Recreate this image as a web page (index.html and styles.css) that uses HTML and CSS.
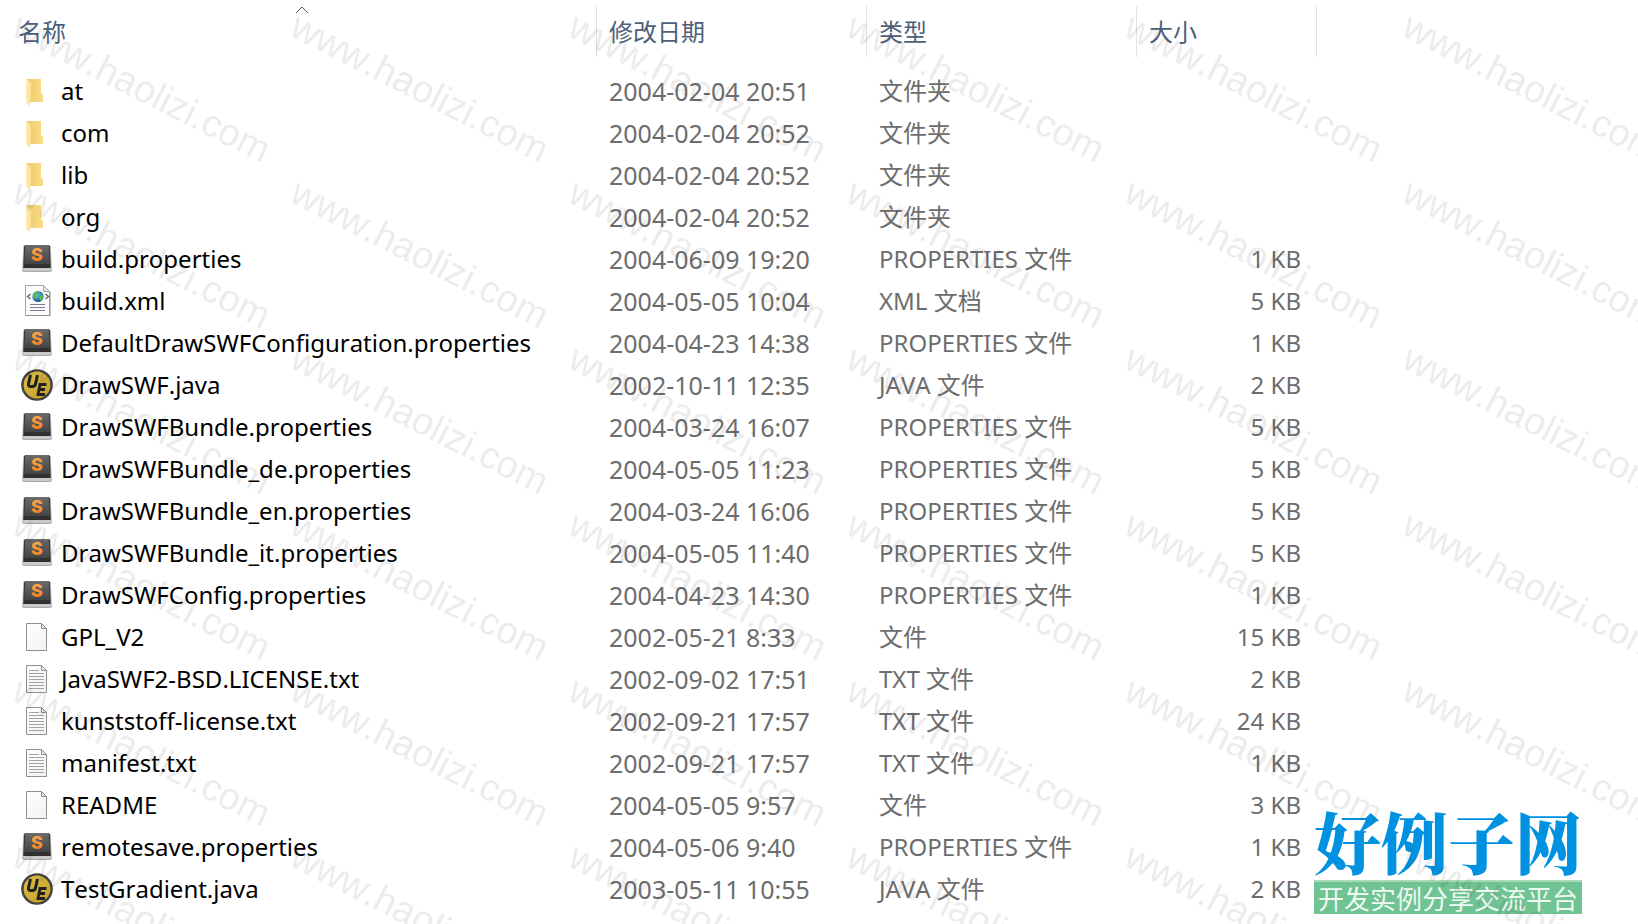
FILE: index.html
```html
<!DOCTYPE html>
<html lang="zh-CN">
<head>
<meta charset="utf-8">
<title>文件列表</title>
<link rel="stylesheet" href="styles.css">
</head>
<body>
<svg class="sprite" aria-hidden="true">
  <defs>
    <linearGradient id="folder-back" x1="0" x2="1"><stop offset="0" stop-color="#edc96d"/><stop offset="1" stop-color="#fbdc85"/></linearGradient>
    <linearGradient id="folder-front" x1="0" x2="1"><stop offset="0" stop-color="#ffeeb5"/><stop offset="1" stop-color="#fbdf92"/></linearGradient>
    <linearGradient id="key-face" x1="0" y1="0" x2="0" y2="1"><stop offset="0" stop-color="#6c6c6c"/><stop offset="1" stop-color="#444444"/></linearGradient>
    <linearGradient id="key-letter" x1="0" y1="0" x2="0" y2="1"><stop offset="0" stop-color="#ffb152"/><stop offset="1" stop-color="#f47a1c"/></linearGradient>
    <linearGradient id="gold" x1="0" y1="0" x2="1" y2="1"><stop offset="0" stop-color="#dcc04c"/><stop offset="1" stop-color="#c39b22"/></linearGradient>
    <linearGradient id="paper" x1="0" y1="0" x2="1" y2="1"><stop offset="0" stop-color="#ffffff"/><stop offset="1" stop-color="#f1f2f3"/></linearGradient>
    <radialGradient id="globe" cx=".4" cy=".35" r=".7"><stop offset="0" stop-color="#6cc4f2"/><stop offset="1" stop-color="#1a3fa8"/></radialGradient>
  </defs>
  <symbol id="folder" viewBox="0 0 32 32">
    <path d="M5 4h15v14l2 2v7H9z" fill="url(#folder-back)"/>
    <path d="M5 4l5 4v18h-1v5l-4-3z" fill="url(#folder-front)"/>
  </symbol>
  <symbol id="sublime" viewBox="0 0 32 32">
    <path d="M4 2h24q1.500 0 1.700 1.500L31 26q0 3-2 3H3q-2 0-2-3L2.300 3.500Q2.500 2 4 2z" fill="#c9c9cb"/>
    <path d="M1.500 26.500q.5 2 2 2h25q1.500 0 2-2" fill="none" stroke="#a9a9ad"/>
    <path d="M4.500 2h23l1.500 1.500.8 21.500H2.200L3 3.500z" fill="#303030"/>
    <path d="M5 2h22l1 1.500.7 17.500H3.300L4 3.500z" fill="url(#key-face)"/>
    <text x="16" y="18" text-anchor="middle" class="key-letter">S</text>
  </symbol>
  <symbol id="xml" viewBox="0 0 32 32">
    <path d="M4.500.5h18l6 6v24h-24z" fill="#fcfcfd" stroke="#a5a5a8"/>
    <path d="M5 30.500h24V7" fill="none" stroke="#8e8e92"/>
    <path d="M22.500.5v6h6z" fill="#e6e6ea" stroke="#a5a5a8"/>
    <circle cx="17" cy="11.500" r="5.600" fill="url(#globe)"/>
    <path d="M12 10q2-4 5-3.500l1 2-3 2 1 2-2 2q-2-2-2-4.500zM18 12l3-3 1.500 2-1 3-2 2.500z" fill="#4fc044"/>
    <path d="M9.500 9L6.500 11.500l3 2.500M24.500 9l3 2.500-3 2.500" fill="none" stroke="#5a5a66" stroke-width="1.200"/>
    <path d="M9 19.500h15M9 22.500h15M9 25.500h15" stroke="#8579a0"/>
  </symbol>
  <symbol id="ultraedit" viewBox="0 0 32 32">
    <circle cx="16" cy="16" r="14.600" fill="url(#gold)" stroke="#424242" stroke-width="2.400"/>
    <path d="M9.500 6L7.500 15q-.3 2.500 2 2.500h2q2.500 0 3-2.500l2-9" fill="none" stroke="#20201c" stroke-width="3"/>
    <path d="M25.500 15.500h-6.500l-2 10h7M18 20.500h6" fill="none" stroke="#20201c" stroke-width="2.800"/>
  </symbol>
  <symbol id="blank" viewBox="0 0 32 32">
    <path d="M5.500 2.500h15l5 5v22h-20z" fill="url(#paper)" stroke="#8f8f8f"/>
    <path d="M20.500 2.500v5h5z" fill="#e8e8e8" stroke="#8f8f8f"/>
  </symbol>
  <symbol id="text" viewBox="0 0 32 32">
    <use href="#blank"/>
    <path d="M8 7.500h10M8 10.500h15M8 13.500h15M8 16.500h15M8 19.500h15M8 22.500h15M8 25.500h15" stroke="#a2a2a2"/>
  </symbol>
</svg>

<main class="explorer">
  <table class="files">
    <colgroup><col class="col-name"><col class="col-date"><col class="col-type"><col class="col-size"><col></colgroup>
    <thead>
      <tr>
        <th aria-sort="ascending"><button type="button">名称</button><svg class="sort" viewBox="0 0 14 8" aria-hidden="true"><path d="M1 7l6-6 6 6"/></svg></th>
        <th><button type="button">修改日期</button></th>
        <th><button type="button">类型</button></th>
        <th><button type="button">大小</button></th>
        <td></td>
      </tr>
    </thead>
    <tbody>
      <tr><td><span class="name"><svg><use href="#folder"/></svg>at</span></td><td>2004-02-04 20:51</td><td>文件夹</td><td></td></tr>
      <tr><td><span class="name"><svg><use href="#folder"/></svg>com</span></td><td>2004-02-04 20:52</td><td>文件夹</td><td></td></tr>
      <tr><td><span class="name"><svg><use href="#folder"/></svg>lib</span></td><td>2004-02-04 20:52</td><td>文件夹</td><td></td></tr>
      <tr><td><span class="name"><svg><use href="#folder"/></svg>org</span></td><td>2004-02-04 20:52</td><td>文件夹</td><td></td></tr>
      <tr><td><span class="name"><svg><use href="#sublime"/></svg>build.properties</span></td><td>2004-06-09 19:20</td><td>PROPERTIES 文件</td><td>1 KB</td></tr>
      <tr><td><span class="name"><svg><use href="#xml"/></svg>build.xml</span></td><td>2004-05-05 10:04</td><td>XML 文档</td><td>5 KB</td></tr>
      <tr><td><span class="name"><svg><use href="#sublime"/></svg>DefaultDrawSWFConfiguration.properties</span></td><td>2004-04-23 14:38</td><td>PROPERTIES 文件</td><td>1 KB</td></tr>
      <tr><td><span class="name"><svg><use href="#ultraedit"/></svg>DrawSWF.java</span></td><td>2002-10-11 12:35</td><td>JAVA 文件</td><td>2 KB</td></tr>
      <tr><td><span class="name"><svg><use href="#sublime"/></svg>DrawSWFBundle.properties</span></td><td>2004-03-24 16:07</td><td>PROPERTIES 文件</td><td>5 KB</td></tr>
      <tr><td><span class="name"><svg><use href="#sublime"/></svg>DrawSWFBundle_de.properties</span></td><td>2004-05-05 11:23</td><td>PROPERTIES 文件</td><td>5 KB</td></tr>
      <tr><td><span class="name"><svg><use href="#sublime"/></svg>DrawSWFBundle_en.properties</span></td><td>2004-03-24 16:06</td><td>PROPERTIES 文件</td><td>5 KB</td></tr>
      <tr><td><span class="name"><svg><use href="#sublime"/></svg>DrawSWFBundle_it.properties</span></td><td>2004-05-05 11:40</td><td>PROPERTIES 文件</td><td>5 KB</td></tr>
      <tr><td><span class="name"><svg><use href="#sublime"/></svg>DrawSWFConfig.properties</span></td><td>2004-04-23 14:30</td><td>PROPERTIES 文件</td><td>1 KB</td></tr>
      <tr><td><span class="name"><svg><use href="#blank"/></svg>GPL_V2</span></td><td>2002-05-21 8:33</td><td>文件</td><td>15 KB</td></tr>
      <tr><td><span class="name"><svg><use href="#text"/></svg>JavaSWF2-BSD.LICENSE.txt</span></td><td>2002-09-02 17:51</td><td>TXT 文件</td><td>2 KB</td></tr>
      <tr><td><span class="name"><svg><use href="#text"/></svg>kunststoff-license.txt</span></td><td>2002-09-21 17:57</td><td>TXT 文件</td><td>24 KB</td></tr>
      <tr><td><span class="name"><svg><use href="#text"/></svg>manifest.txt</span></td><td>2002-09-21 17:57</td><td>TXT 文件</td><td>1 KB</td></tr>
      <tr><td><span class="name"><svg><use href="#blank"/></svg>README</span></td><td>2004-05-05 9:57</td><td>文件</td><td>3 KB</td></tr>
      <tr><td><span class="name"><svg><use href="#sublime"/></svg>remotesave.properties</span></td><td>2004-05-06 9:40</td><td>PROPERTIES 文件</td><td>1 KB</td></tr>
      <tr><td><span class="name"><svg><use href="#ultraedit"/></svg>TestGradient.java</span></td><td>2003-05-11 10:55</td><td>JAVA 文件</td><td>2 KB</td></tr>
    </tbody>
  </table>
  <div class="brand">
    <span class="brand-name">好例子网</span>
    <span class="brand-slogan">开发实例分享交流平台</span>
  </div>
  <svg class="watermark" aria-hidden="true">
    <defs>
      <pattern id="tile" width="278" height="166" patternUnits="userSpaceOnUse">
        <text transform="translate(10 35) rotate(27)">www.haolizi.com</text>
      </pattern>
    </defs>
    <rect width="100%" height="100%" fill="url(#tile)"/>
  </svg>
</main>
</body>
</html>
```
FILE: styles.css
```css
* { box-sizing: border-box; }
body {
  margin: 0;
  background: #fff;
  color: #6d6d6d;
  font: 24px/32px "Noto Sans", "Noto Sans CJK SC", sans-serif;
  font-kerning: none;
}
.sprite { position: absolute; width: 0; height: 0; }
.explorer { position: relative; min-height: 100vh; overflow: hidden; }

.files { width: 100%; table-layout: fixed; border-collapse: collapse; }
.col-name { width: 597px; }
.col-date, .col-type { width: 270px; }
.col-size { width: 180px; }

.files th {
  position: relative;
  height: 70px;
  padding: 6px 0 13px;
  text-align: left;
  vertical-align: top;
  font-weight: 400;
}
.files th button {
  display: block;
  width: 100%;
  height: 51px;
  padding: 0 12px;
  border: 0;
  border-right: 1px solid #e2e2e2;
  background: none;
  color: #4c607a;
  font: inherit;
  text-align: left;
}
.files th:first-child button { padding-left: 18px; }
.sort {
  position: absolute;
  top: 6px;
  left: 50%;
  width: 14px;
  height: 8px;
  margin-left: -4px;
  fill: none;
  stroke: #5c5c5c;
}

.files tbody td { height: 42px; padding: 0 12px; white-space: nowrap; }
.files tbody td:first-child { padding-left: 21px; color: #000; }
.files tbody td:nth-child(2) { font-size: 25px; }
.files tbody td:nth-child(4) { padding-right: 16px; text-align: right; }
.name { display: flex; align-items: center; gap: 8px; }
.name svg { flex: none; width: 32px; height: 32px; }
.key-letter { fill: url(#key-letter); font: 800 18px/1 Inter, sans-serif; }

.brand {
  position: absolute;
  right: 56px;
  bottom: 10px;
  display: flex;
  flex-direction: column;
  gap: 6px;
  white-space: nowrap;
}
.brand-name {
  color: #0092e0;
  font: 900 67px/68px "Noto Serif CJK SC", "Noto Sans CJK SC", sans-serif;
}
.brand-slogan {
  padding: 0 4px;
  border-top: 2px solid #a9dabb;
  background: #70c392;
  color: #eefaf2;
  font: 26px/32px "Noto Sans CJK SC", sans-serif;
}

.watermark {
  position: absolute;
  inset: 0;
  width: 100%;
  height: 100%;
  pointer-events: none;
}
.watermark text {
  fill: #000;
  fill-opacity: 0.075;
  font: 38px/1 "Liberation Sans", sans-serif;
  font-kerning: none;
}
```
